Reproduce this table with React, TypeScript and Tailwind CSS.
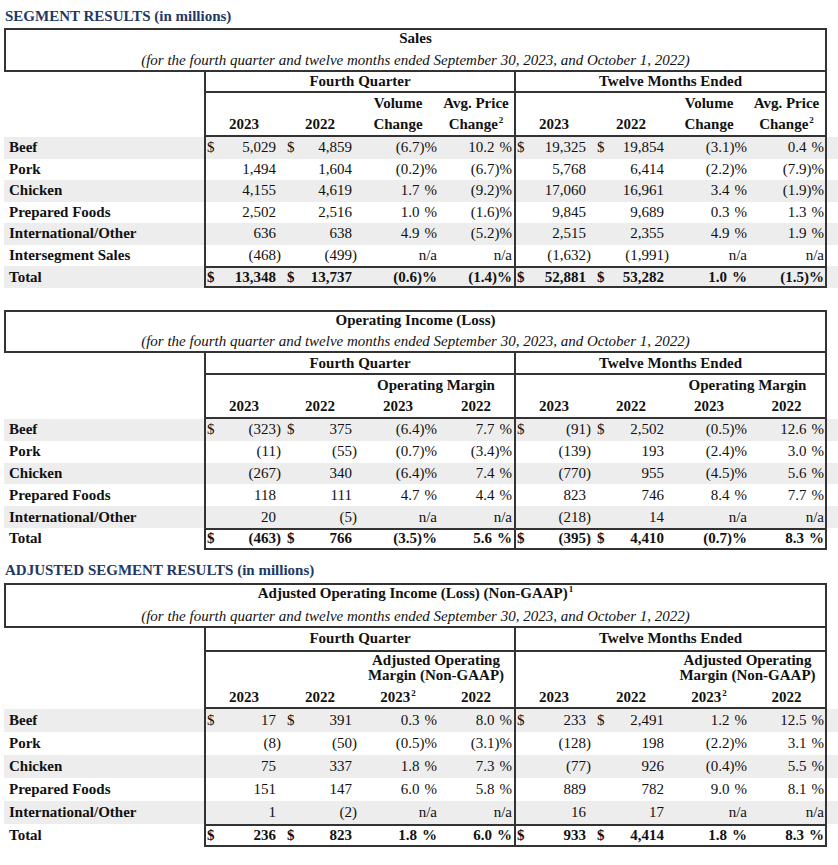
import React from 'react';

const BC = 'border-[#333333]';

type Four = [string, string, string, string];
type DataRow = {
  label: string;
  q: Four;
  t: Four;
  dollar?: boolean;
  bold?: boolean;
  gray?: boolean;
  total?: boolean;
};

const QW = ['w-[76px]', 'w-[76px]', 'w-[80px]', 'w-[76px]'];
const TW = ['w-[76px]', 'w-[78px]', 'w-[78px]', 'w-[77px]'];

function Money({ v, dollar, w, pl }: { v: string; dollar?: boolean; w: string; pl: string }) {
  const neg = v.startsWith('(');
  const num = neg ? v.slice(0, -1) : v;
  return (
    <div className={`${w} ${pl} pr-[1px] flex items-center justify-between whitespace-nowrap`}>
      <span>{dollar ? '$' : ''}</span>
      <span>
        {num}
        <span className={neg ? '' : 'invisible'}>)</span>
      </span>
    </div>
  );
}

function Pct({ v, w, pr }: { v: string; w: string; pr: string }) {
  if (v === 'n/a') return <div className={`${w} ${pr} text-right whitespace-nowrap`}>n/a</div>;
  const neg = v.startsWith('(');
  const num = neg ? v.slice(0, -1) : v;
  return (
    <div className={`${w} ${pr} text-right whitespace-nowrap`}>
      {num}
      <span className={neg ? '' : 'invisible'}>)</span>%
    </div>
  );
}

function Cells({ vals, widths, dollar, side }: { vals: Four; widths: string[]; dollar?: boolean; side: 'q' | 't' }) {
  return (
    <>
      <Money v={vals[0]} dollar={dollar} w={widths[0]} pl="pl-[1px]" />
      <Money v={vals[1]} dollar={dollar} w={widths[1]} pl="pl-[5px]" />
      <Pct v={vals[2]} w={widths[2]} pr="pr-[1px]" />
      <Pct v={vals[3]} w={widths[3]} pr={side === 'q' ? 'pr-[2px]' : 'pr-[1px]'} />
    </>
  );
}

function Row({ r, h }: { r: DataRow; h: string }) {
  const yb = r.total ? 'border-t-2 border-b-2' : '';
  return (
    <div className={`flex ${h} leading-none ${r.gray ? 'bg-[#ededed]' : ''} ${r.bold ? 'font-bold' : ''}`}>
      <div className={`w-[200px] pl-[5px] flex items-center font-bold whitespace-nowrap ${r.total ? 'border-y-2 border-transparent' : ''}`}>
        {r.label}
      </div>
      <div className={`w-[312px] flex items-center border-l-2 border-r-2 ${BC} ${yb}`}>
        <Cells vals={r.q} widths={QW} dollar={r.dollar} side="q" />
      </div>
      <div className={`w-[311px] flex items-center border-r-2 ${BC} ${yb}`}>
        <Cells vals={r.t} widths={TW} dollar={r.dollar} side="t" />
      </div>
    </div>
  );
}

function TitleBox({ title, gap }: { title: React.ReactNode; gap: string }) {
  return (
    <div className={`w-[823px] border-2 ${BC} flex flex-col items-center`}>
      <div className="font-bold leading-[16px] whitespace-nowrap">{title}</div>
      <div className={`italic leading-[20px] ${gap} whitespace-nowrap`}>
        (for the fourth quarter and twelve months ended September 30, 2023, and October 1, 2022)
      </div>
    </div>
  );
}

function PeriodRow({ h }: { h: string }) {
  return (
    <div className={`flex ${h} font-bold leading-none`}>
      <div className="w-[200px]" />
      <div className={`w-[312px] border-l-2 border-r-2 border-b-2 ${BC} flex items-center justify-center`}>Fourth Quarter</div>
      <div className={`w-[311px] border-r-2 border-b-2 ${BC} flex items-center justify-center`}>Twelve Months Ended</div>
    </div>
  );
}

function HeadLine({ widths, items, cls }: { widths: string[]; items: React.ReactNode[]; cls: string }) {
  return (
    <div className={`flex ${cls}`}>
      {widths.map((w, i) => (
        <div key={i} className={`${w} text-center whitespace-nowrap`}>
          {items[i]}
        </div>
      ))}
    </div>
  );
}

function SpanLine({ widths, text, cls }: { widths: string[]; text: React.ReactNode[]; cls: string }) {
  return (
    <div className={`flex ${cls}`}>
      <div className={widths[0]} />
      <div className={widths[1]} />
      <div className="flex-1 text-center whitespace-nowrap">{text}</div>
    </div>
  );
}

const Sup = ({ n }: { n: string }) => <sup className="text-[9px] top-[-6px] ml-[1px]">{n}</sup>;

function HeadHalves({ h, q, t }: { h: string; q: React.ReactNode; t: React.ReactNode }) {
  return (
    <div className={`flex ${h} font-bold`}>
      <div className="w-[200px]" />
      <div className={`w-[312px] border-l-2 border-r-2 border-b-2 ${BC} flex flex-col justify-end`}>{q}</div>
      <div className={`w-[311px] border-r-2 border-b-2 ${BC} flex flex-col justify-end`}>{t}</div>
    </div>
  );
}

const sales: DataRow[] = [
  { label: 'Beef', q: ['5,029', '4,859', '(6.7)', '10.2'], t: ['19,325', '19,854', '(3.1)', '0.4'], dollar: true, gray: true },
  { label: 'Pork', q: ['1,494', '1,604', '(0.2)', '(6.7)'], t: ['5,768', '6,414', '(2.2)', '(7.9)'] },
  { label: 'Chicken', q: ['4,155', '4,619', '1.7', '(9.2)'], t: ['17,060', '16,961', '3.4', '(1.9)'], gray: true },
  { label: 'Prepared Foods', q: ['2,502', '2,516', '1.0', '(1.6)'], t: ['9,845', '9,689', '0.3', '1.3'] },
  { label: 'International/Other', q: ['636', '638', '4.9', '(5.2)'], t: ['2,515', '2,355', '4.9', '1.9'], gray: true },
  { label: 'Intersegment Sales', q: ['(468)', '(499)', 'n/a', 'n/a'], t: ['(1,632)', '(1,991)', 'n/a', 'n/a'] },
  { label: 'Total', q: ['13,348', '13,737', '(0.6)', '(1.4)'], t: ['52,881', '53,282', '1.0', '(1.5)'], dollar: true, bold: true, gray: true, total: true },
];

const opInc: DataRow[] = [
  { label: 'Beef', q: ['(323)', '375', '(6.4)', '7.7'], t: ['(91)', '2,502', '(0.5)', '12.6'], dollar: true, gray: true },
  { label: 'Pork', q: ['(11)', '(55)', '(0.7)', '(3.4)'], t: ['(139)', '193', '(2.4)', '3.0'] },
  { label: 'Chicken', q: ['(267)', '340', '(6.4)', '7.4'], t: ['(770)', '955', '(4.5)', '5.6'], gray: true },
  { label: 'Prepared Foods', q: ['118', '111', '4.7', '4.4'], t: ['823', '746', '8.4', '7.7'] },
  { label: 'International/Other', q: ['20', '(5)', 'n/a', 'n/a'], t: ['(218)', '14', 'n/a', 'n/a'], gray: true },
  { label: 'Total', q: ['(463)', '766', '(3.5)', '5.6'], t: ['(395)', '4,410', '(0.7)', '8.3'], dollar: true, bold: true, total: true },
];

const adj: DataRow[] = [
  { label: 'Beef', q: ['17', '391', '0.3', '8.0'], t: ['233', '2,491', '1.2', '12.5'], dollar: true, gray: true },
  { label: 'Pork', q: ['(8)', '(50)', '(0.5)', '(3.1)'], t: ['(128)', '198', '(2.2)', '3.1'] },
  { label: 'Chicken', q: ['75', '337', '1.8', '7.3'], t: ['(77)', '926', '(0.4)', '5.5'], gray: true },
  { label: 'Prepared Foods', q: ['151', '147', '6.0', '5.8'], t: ['889', '782', '9.0', '8.1'] },
  { label: 'International/Other', q: ['1', '(2)', 'n/a', 'n/a'], t: ['16', '17', 'n/a', 'n/a'], gray: true },
  { label: 'Total', q: ['236', '823', '1.8', '6.0'], t: ['933', '4,414', '1.8', '8.3'], dollar: true, bold: true, total: true },
];

export default function App() {
  return (
    <div className="bg-white w-[838px] min-h-[865px] pl-[4px] text-[15px] text-[#111111] font-['Liberation_Serif','Times_New_Roman',serif]">
      <div className="pl-[1px] pt-[6px] pb-[2px] leading-[20px] font-bold text-[#1f3864]">SEGMENT RESULTS (in millions)</div>

      {/* Sales */}
      <TitleBox title="Sales" gap="mt-[4px]" />
      <PeriodRow h="h-[21px]" />
      <HeadHalves
        h="h-[44px]"
        q={
          <>
            <HeadLine widths={QW} items={['', '', 'Volume', 'Avg. Price']} cls="leading-[21px]" />
            <HeadLine widths={QW} items={['2023', '2022', 'Change', <>Change<Sup n="2" /></>]} cls="leading-[21px]" />
          </>
        }
        t={
          <>
            <HeadLine widths={TW} items={['', '', 'Volume', 'Avg. Price']} cls="leading-[21px]" />
            <HeadLine widths={TW} items={['2023', '2022', 'Change', <>Change<Sup n="2" /></>]} cls="leading-[21px]" />
          </>
        }
      />
      {sales.map((r) => (
        <Row key={r.label} r={r} h={r.total ? 'h-[22px]' : 'h-[21.5px]'} />
      ))}

      <div className="h-[22px]" />

      {/* Operating income */}
      <TitleBox title="Operating Income (Loss)" gap="mt-[3px]" />
      <PeriodRow h="h-[22px]" />
      <HeadHalves
        h="h-[44px]"
        q={
          <>
            <SpanLine widths={QW} text={['Operating Margin']} cls="leading-[21px]" />
            <HeadLine widths={QW} items={['2023', '2022', '2023', '2022']} cls="leading-[21px]" />
          </>
        }
        t={
          <>
            <SpanLine widths={TW} text={['Operating Margin']} cls="leading-[21px]" />
            <HeadLine widths={TW} items={['2023', '2022', '2023', '2022']} cls="leading-[21px]" />
          </>
        }
      />
      {opInc.map((r) => (
        <Row key={r.label} r={r} h={r.total ? 'h-[22px]' : 'h-[21.8px]'} />
      ))}

      <div className="pl-[1px] pt-[10px] pb-[3px] leading-[20px] font-bold text-[#1f3864]">ADJUSTED SEGMENT RESULTS (in millions)</div>

      {/* Adjusted */}
      <TitleBox title={<>Adjusted Operating Income (Loss) (Non-GAAP)<Sup n="1" /></>} gap="mt-[5px]" />
      <PeriodRow h="h-[24px]" />
      <HeadHalves
        h="h-[57px]"
        q={
          <>
            <SpanLine widths={QW} text={['Adjusted Operating']} cls="leading-[15px]" />
            <SpanLine widths={QW} text={['Margin (Non-GAAP)']} cls="leading-[15px] mb-[4px]" />
            <HeadLine widths={QW} items={['2023', '2022', <>2023<Sup n="2" /></>, '2022']} cls="leading-[20px]" />
          </>
        }
        t={
          <>
            <SpanLine widths={TW} text={['Adjusted Operating']} cls="leading-[15px]" />
            <SpanLine widths={TW} text={['Margin (Non-GAAP)']} cls="leading-[15px] mb-[4px]" />
            <HeadLine widths={TW} items={['2023', '2022', <>2023<Sup n="2" /></>, '2022']} cls="leading-[20px]" />
          </>
        }
      />
      {adj.map((r) => (
        <Row key={r.label} r={r} h="h-[23px]" />
      ))}
    </div>
  );
}
